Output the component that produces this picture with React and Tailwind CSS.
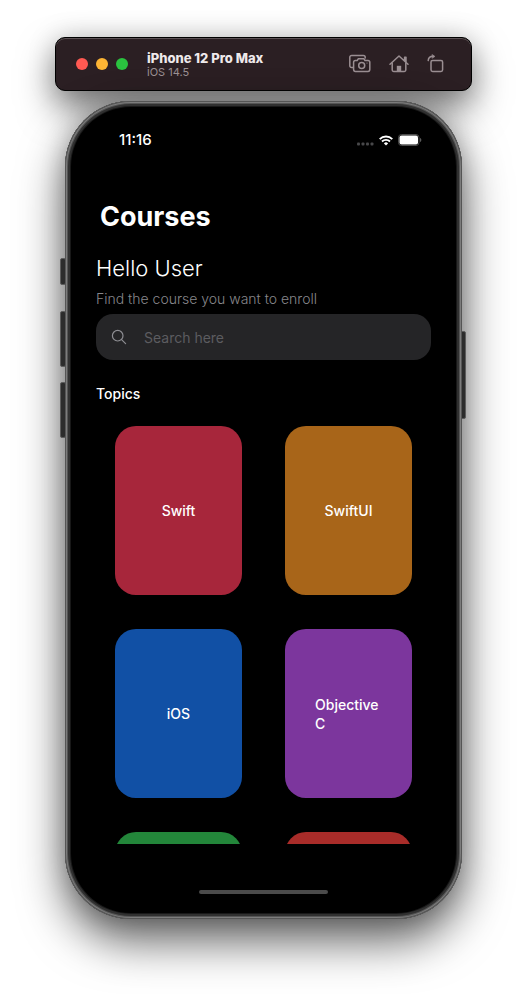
const topics = [
  { name: 'Swift', color: 'bg-[#a7263b]' },
  { name: 'SwiftUI', color: 'bg-[#a86519]' },
  { name: 'iOS', color: 'bg-[#1150a5]' },
  { name: 'Objective C', color: 'bg-[#7c369d]' },
  { name: '', label: 'Green topic', color: 'bg-[#23863a]' },
  { name: '', label: 'Red topic', color: 'bg-[#a82c29]' },
];

function ScreenshotIcon() {
  return (
    <svg width="22" height="20" viewBox="0 0 22 20" fill="none" stroke="currentColor" strokeWidth="1.500" strokeLinejoin="round" strokeLinecap="round">
      <path d="M4 13.600H2.600A1.800 1.800 0 0 1 .8 11.800V3.200A1.800 1.800 0 0 1 2.600 1.400H14.400A1.800 1.800 0 0 1 16.200 3.200V4" />
      <path d="M6.400 6.500H8.200L9.400 4.700H14.800L16 6.500H19A1.800 1.800 0 0 1 20.800 8.300V15.600A1.800 1.800 0 0 1 19 17.400H6.400A1.800 1.800 0 0 1 4.600 15.600V8.300A1.800 1.800 0 0 1 6.400 6.500Z" />
      <circle cx="12.700" cy="11.500" r="3" />
      <circle cx="18" cy="9" r=".6" fill="currentColor" stroke="none" />
    </svg>
  );
}

function HomeIcon() {
  return (
    <svg width="20" height="20" viewBox="0 0 20 20" fill="none" stroke="currentColor" strokeWidth="1.500" strokeLinejoin="round" strokeLinecap="round">
      <path d="M1 10.200 10 2l9 8.200M15.600 6.500V3.200h1.400V8" />
      <path d="M3.200 9v7A1.400 1.400 0 0 0 4.600 17.400H15.400A1.400 1.400 0 0 0 16.800 16V9" />
      <path d="M7.800 17V11.800H12.200V17Z" fill="currentColor" stroke="none" />
    </svg>
  );
}

function RotateIcon() {
  return (
    <svg width="18" height="20" viewBox="0 0 18 20" fill="none" stroke="currentColor" strokeWidth="1.500" strokeLinejoin="round" strokeLinecap="round">
      <rect x="4" y="6.400" width="11.600" height="11" rx="1.600" />
      <path d="M1.200 6.600C1.400 3.900 3 2.300 6 2.300" />
      <path d="M5.300 .6 8 2.400 5.300 4.200Z" fill="currentColor" strokeWidth=".5" />
    </svg>
  );
}

function StatusIcons() {
  return (
    <div className="flex items-center gap-[5px]">
      <svg width="17" height="11" viewBox="0 0 17 11" fill="#48484a" aria-hidden="true">
        <rect x="0" y="7.500" width="3" height="3" rx="1" />
        <rect x="4.500" y="7.500" width="3" height="3" rx="1" />
        <rect x="9" y="7.500" width="3" height="3" rx="1" />
        <rect x="13.500" y="7.500" width="3" height="3" rx="1" />
      </svg>
      <svg width="14" height="11" viewBox="0 0 14 11" fill="none" stroke="#fff" strokeWidth="1.900" aria-hidden="true">
        <path d="M.7 4.100a9 9 0 0 1 12.600 0" />
        <path d="M3 6.500a5.700 5.700 0 0 1 8 0" />
        <path d="M7 10.600 4.900 8.400a3 3 0 0 1 4.200 0Z" fill="#fff" stroke="none" />
      </svg>
      <svg width="24" height="12" viewBox="0 0 24 12" fill="none" aria-hidden="true">
        <rect x=".5" y=".5" width="20.500" height="11" rx="3" stroke="#4b4b4b" />
        <rect x="1.500" y="1.500" width="18.500" height="9" rx="2" fill="#fff" />
        <path d="M22 4v4c.9-.3 1.300-1.100 1.300-2S22.900 4.300 22 4Z" fill="#5b5b5b" />
      </svg>
    </div>
  );
}

function SearchIcon() {
  return (
    <svg width="16" height="16" viewBox="0 0 16 16" fill="none" stroke="#8e8e93" strokeWidth="1.200" strokeLinecap="round" aria-hidden="true">
      <circle cx="6.700" cy="6.700" r="5.300" />
      <path d="m10.600 10.600 4 4" />
    </svg>
  );
}

function TitleBar() {
  return (
    <header className="flex h-[54px] items-center rounded-[10px] border border-black bg-[#2b1f23] pl-5 pr-[26px] shadow-[inset_0_1px_0_#5b5154,0_18px_36px_rgba(0,0,0,0.5),0_0_28px_rgba(0,0,0,0.18)]">
      <div className="flex gap-2">
        <button aria-label="Close" className="size-3 rounded-full bg-[#ff5952]" />
        <button aria-label="Minimize" className="size-3 rounded-full bg-[#fdb434]" />
        <button aria-label="Zoom" className="size-3 rounded-full bg-[#2ac23f]" />
      </div>
      <div className="ml-[19px] flex-1">
        <h1 className="text-[13px] font-extrabold leading-4 text-[#eee9eb]">iPhone 12 Pro Max</h1>
        <p className="text-[11px] leading-[13px] text-[#9c9194]">iOS 14.5</p>
      </div>
      <div className="flex items-center gap-[18px] text-[#9a8e92]">
        <button aria-label="Take screenshot"><ScreenshotIcon /></button>
        <button aria-label="Home"><HomeIcon /></button>
        <button aria-label="Rotate"><RotateIcon /></button>
      </div>
    </header>
  );
}

function SideButtons() {
  const base = 'absolute w-[6px] rounded-[2px] border border-[#5c5c5c] bg-[#2c2c2c] ';
  return (
    <div aria-hidden="true">
      <span className={base + '-left-[5px] top-[157px] h-[27px]'} />
      <span className={base + '-left-[5px] top-[210px] h-[56px]'} />
      <span className={base + '-left-[5px] top-[281px] h-[56px]'} />
      <span className={base + '-right-[4px] top-[230px] h-[88px]'} />
    </div>
  );
}

export default function App() {
  return (
    <div className="min-h-screen overflow-hidden bg-white px-[55px] pb-[75px] pt-[37px] font-['Inter',sans-serif]">
      <TitleBar />
      <div className="relative mx-[10px] mt-[10px] rounded-[66px] shadow-[0_22px_46px_rgba(0,0,0,0.62),0_0_24px_rgba(0,0,0,0.2)]">
        <SideButtons />
        <main className="relative rounded-[66px] bg-black px-[31px] pb-[25px] pt-[29px] text-white shadow-[inset_0_0_0_1px_#555,inset_0_0_0_2px_#7c7c7c,inset_0_0_0_3px_#555,inset_0_0_0_5px_#303030,inset_0_0_0_6px_#181818]">
          <div className="flex h-5 items-center justify-between pl-[23px] pr-[9px]">
            <time className="text-[15px] font-medium">11:16</time>
            <StatusIcons />
          </div>
          <h2 className="ml-1 mt-[49px] text-[27px] font-bold leading-9">Courses</h2>
          <p className="mt-[19px] text-[22px] font-light leading-7">Hello User</p>
          <p className="mt-[7px] text-[14px] font-light leading-5 text-[#87878b]">Find the course you want to enroll</p>
          <label className="mt-[5px] flex h-[46px] items-center rounded-[17px] bg-[#252527] pl-[15px] pr-4">
            <SearchIcon />
            <input
              type="search"
              aria-label="Search courses"
              placeholder="Search here"
              className="ml-[17px] min-w-0 flex-1 bg-transparent text-[14px] outline-none placeholder:text-[#5c5c60]"
            />
          </label>
          <h3 className="mt-[24px] text-[14px] font-medium leading-5">Topics</h3>
          <div className="mt-[22px] h-[418px] overflow-hidden">
            <div className="grid grid-cols-2 gap-x-[43px] gap-y-[34px] px-[19px]">
              {topics.map((topic) => (
                <button
                  key={topic.color}
                  aria-label={topic.label}
                  className={'flex h-[169px] items-center justify-center rounded-[21px] px-[30px] text-left text-[14px] font-medium leading-[19px] ' + topic.color}
                >
                  {topic.name}
                </button>
              ))}
            </div>
          </div>
          <div className="mx-auto mt-[46px] h-[4px] w-[129px] rounded-full bg-[#4b4b4b]" />
        </main>
      </div>
    </div>
  );
}
